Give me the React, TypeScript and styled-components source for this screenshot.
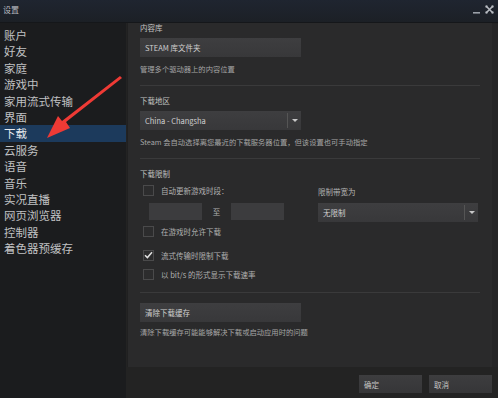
import React from "react";
import styled, { createGlobalStyle } from "styled-components";

const Global = createGlobalStyle`
  html, body { margin: 0; padding: 0; background: #1e2127; }
  body { font-family: "Noto Sans CJK SC", "Noto Sans", sans-serif; }
  * { box-sizing: border-box; }
`;

const Window = styled.div`
  width: 498px;
  height: 398px;
  display: flex;
  flex-direction: column;
  background: #232324;
  position: relative;
  overflow: hidden;
`;

const TitleBar = styled.div`
  height: 23px;
  flex: none;
  display: flex;
  align-items: flex-start;
  justify-content: space-between;
  background: linear-gradient(#1f2530, #1c2026);
  border-bottom: 1px solid #15171a;
  padding: 4px 4px 0 3px;
`;

const Title = styled.span`
  font-size: 8px;
  color: #b9bcc0;
  line-height: 12px;
`;

const WinButtons = styled.div`
  display: flex;
  align-items: center;
  gap: 4px;
  padding-top: 1px;
`;

const Body = styled.div`
  flex: 1;
  display: flex;
  min-height: 0;
`;

const Sidebar = styled.nav`
  width: 126px;
  flex: none;
  background: #1b1c1e;
  padding-top: 4px;
  display: flex;
  flex-direction: column;
`;

const NavItem = styled.div<{ $active?: boolean }>`
  height: 16.4px;
  line-height: 16.4px;
  padding-left: 4px;
  font-size: 11.5px;
  color: ${(p) => (p.$active ? "#e6e9ee" : "#c0c1c3")};
  background: ${(p) => (p.$active ? "#1c3a5c" : "transparent")};
  white-space: nowrap;
`;

const Main = styled.div`
  flex: 1;
  display: flex;
  flex-direction: column;
  background: #232323;
`;

const Content = styled.div`
  flex: 1;
  background: #2a2a2b;
  margin-left: 1px;
  margin-right: 6px;
  padding: 0 12px;
  display: flex;
  flex-direction: column;
  border-left: 1px solid #202021;
`;

const SectionLabel = styled.div`
  font-size: 7.5px;
  color: #c2c2c2;
  line-height: 10px;
`;

const Desc = styled.div`
  font-size: 7.3px;
  color: #a5a5a5;
  line-height: 10px;
  white-space: nowrap;
`;

const Separator = styled.div`
  height: 1px;
  background: #3a3a3b;
  margin: 11px 0 10px;
  width: 340px;
`;

const Spacer = styled.div<{ $h: number }>`
  height: ${(p) => p.$h}px;
  flex: none;
`;

const Field = styled.div<{ $w?: number }>`
  width: ${(p) => p.$w ?? 161}px;
  height: 19px;
  background: linear-gradient(#3e3e40, #38383a);
  display: flex;
  align-items: center;
  padding-left: 5px;
  font-size: 7.5px;
  color: #d0d0d0;
  position: relative;
`;

const Caret = styled.div`
  position: absolute;
  right: 0;
  top: 2px;
  bottom: 2px;
  width: 14px;
  border-left: 1px solid #555;
  display: flex;
  align-items: center;
  justify-content: center;
  &::after {
    content: "";
    border-left: 3px solid transparent;
    border-right: 3px solid transparent;
    border-top: 3px solid #c8c8c8;
  }
`;

const LimitGrid = styled.div`
  display: grid;
  grid-template-columns: 178px 1fr;
  margin-top: 4px;
`;

const Col = styled.div`
  display: flex;
  flex-direction: column;
`;

const CheckRow = styled.div<{ $mt?: number }>`
  display: flex;
  align-items: center;
  gap: 7px;
  height: 14px;
  margin-top: ${(p) => p.$mt ?? 0}px;
  padding-left: 3px;
  font-size: 7.5px;
  color: #b0b0b0;
  white-space: nowrap;
`;

const Box = styled.div`
  width: 11px;
  height: 11px;
  border: 1px solid #4a4a4b;
  background: #2c2c2d;
  display: flex;
  align-items: center;
  justify-content: center;
  flex: none;
`;

const TimeRow = styled.div`
  display: flex;
  align-items: center;
  margin: 6px 0 0 9px;
`;

const TimeBox = styled.div`
  width: 53px;
  height: 17px;
  background: #3c3c3e;
`;

const To = styled.span`
  width: 29px;
  text-align: center;
  font-size: 7.5px;
  color: #b0b0b0;
`;

const RightLabel = styled.div`
  font-size: 7.5px;
  color: #b5b5b5;
  margin-top: 4px;
  margin-bottom: 6px;
  line-height: 10px;
`;

const Footer = styled.div`
  height: 31px;
  flex: none;
  display: flex;
  justify-content: flex-end;
  align-items: flex-start;
  gap: 7px;
  padding: 8px 6px 0 0;
  background: #232323;
`;

const FooterButton = styled.div`
  width: 63px;
  height: 18px;
  background: linear-gradient(#3d3d3f, #363638);
  font-size: 7.5px;
  color: #c5c5c5;
  display: flex;
  align-items: center;
  padding-left: 5px;
`;

const ScrollStrip = styled.div`
  position: absolute;
  right: 0;
  top: 24px;
  width: 6px;
  bottom: 31px;
  background: #252526;
`;

const ArrowLayer = styled.svg`
  position: absolute;
  left: 0;
  top: 0;
  pointer-events: none;
`;

const sidebarItems = [
  "账户",
  "好友",
  "家庭",
  "游戏中",
  "家用流式传输",
  "界面",
  "下载",
  "云服务",
  "语音",
  "音乐",
  "实况直播",
  "网页浏览器",
  "控制器",
  "着色器预缓存",
];

export default function App() {
  return (
    <>
      <Global />
      <Window>
        <TitleBar>
          <Title>设置</Title>
          <WinButtons>
            <svg width="8" height="8" viewBox="0 0 8 8">
              <rect x="0" y="6" width="7" height="1.6" fill="#9aa0a8" />
            </svg>
            <svg width="9" height="9" viewBox="0 0 9 9">
              <path d="M1 1L8 8M8 1L1 8" stroke="#b8bcc2" strokeWidth="1.6" />
              <rect x="0.5" y="0.5" width="2" height="2" fill="#b8bcc2" />
              <rect x="6.5" y="0.5" width="2" height="2" fill="#b8bcc2" />
              <rect x="0.5" y="6.5" width="2" height="2" fill="#b8bcc2" />
              <rect x="6.5" y="6.5" width="2" height="2" fill="#b8bcc2" />
            </svg>
          </WinButtons>
        </TitleBar>
        <Body>
          <Sidebar>
            {sidebarItems.map((s) => (
              <NavItem key={s} $active={s === "下载"}>
                {s}
              </NavItem>
            ))}
          </Sidebar>
          <Main>
            <Content>
              <SectionLabel>内容库</SectionLabel>
              <Spacer $h={5} />
              <Field>STEAM 库文件夹</Field>
              <Spacer $h={7} />
              <Desc>管理多个驱动器上的内容位置</Desc>
              <Separator />
              <SectionLabel>下载地区</SectionLabel>
              <Spacer $h={5} />
              <Field>
                China - Changsha
                <Caret />
              </Field>
              <Spacer $h={7} />
              <Desc>Steam 会自动选择离您最近的下载服务器位置，但该设置也可手动指定</Desc>
              <Separator />
              <SectionLabel>下载限制</SectionLabel>
              <LimitGrid>
                <Col>
                  <CheckRow>
                    <Box />
                    自动更新游戏时段：
                  </CheckRow>
                  <TimeRow>
                    <TimeBox />
                    <To>至</To>
                    <TimeBox />
                  </TimeRow>
                  <CheckRow $mt={4}>
                    <Box />
                    在游戏时允许下载
                  </CheckRow>
                  <CheckRow $mt={10}>
                    <Box>
                      <svg width="9" height="8" viewBox="0 0 9 8">
                        <path d="M1 4.2L3.4 6.6L8 1.2" stroke="#e0e0e0" strokeWidth="1.5" fill="none" />
                      </svg>
                    </Box>
                    流式传输时限制下载
                  </CheckRow>
                  <CheckRow $mt={5}>
                    <Box />
                    以 bit/s 的形式显示下载速率
                  </CheckRow>
                </Col>
                <Col>
                  <RightLabel>限制带宽为</RightLabel>
                  <Field $w={160}>
                    无限制
                    <Caret />
                  </Field>
                </Col>
              </LimitGrid>
              <Separator />
              <Field>清除下载缓存</Field>
              <Spacer $h={5} />
              <Desc>清除下载缓存可能能够解决下载或启动应用时的问题</Desc>
            </Content>
            <Footer>
              <FooterButton>确定</FooterButton>
              <FooterButton>取消</FooterButton>
            </Footer>
          </Main>
        </Body>
        <ScrollStrip />
        <ArrowLayer width="498" height="398" viewBox="0 0 498 398">
          <path
            d="M122 78 L66 122 L70 128 L47 138 L58 116 L62 121 L120 76 Z"
            fill="#ee3a35"
          />
        </ArrowLayer>
      </Window>
    </>
  );
}
